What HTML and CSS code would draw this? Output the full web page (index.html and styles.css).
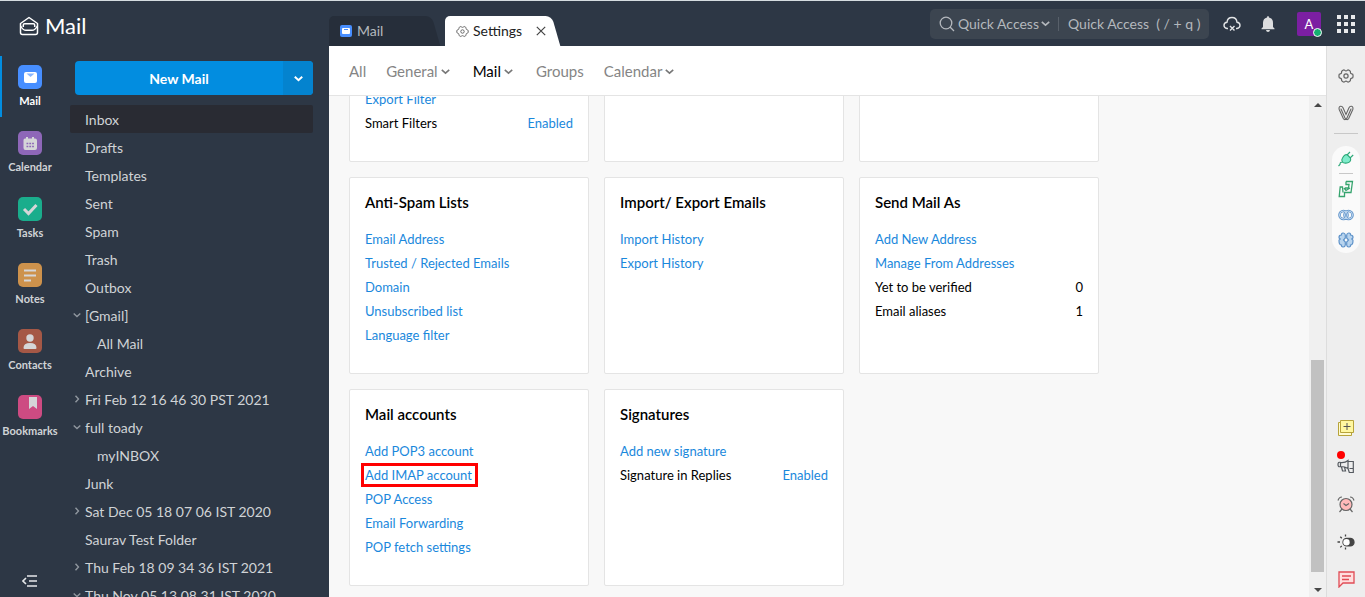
FILE: index.html
```html
<!DOCTYPE html>
<html lang="en">
<head>
<meta charset="utf-8">
<title>Mail - Settings</title>
<link rel="stylesheet" href="styles.css">
</head>
<body>
<svg class="defs" aria-hidden="true">
  <symbol id="gear" viewBox="0 0 16 16"><path d="M5 2.200q1-.7 1.800.2 1.200 1 2.400 0 .8-.9 1.800-.2l1 .7q.6.5.4 1.300-.1 1.300 1.400 1.700 1.200.2 1.200 1.100v2q0 .9-1.200 1.100-1.500.4-1.400 1.700.2.800-.4 1.300l-1 .7q-1 .7-1.800-.2-1.200-1-2.400 0-.8.9-1.800.2l-1-.7q-.6-.5-.4-1.300.1-1.300-1.400-1.700Q1 9.900 1 9V7q0-.9 1.200-1.100 1.500-.4 1.400-1.700-.2-.8.4-1.300z"/><circle cx="8" cy="8" r="2.100"/></symbol>
  <symbol id="down" viewBox="0 0 8 8"><path d="M.7 2.500 4 5.500l3.300-3"/></symbol>
  <symbol id="right" viewBox="0 0 8 8"><path d="M2.500.7 5.500 4l-3 3.300"/></symbol>
</svg>
<div class="app">
  <aside class="sidebar">
    <div class="brand">
      <svg width="20" height="20" viewBox="0 0 20 20" fill="none" stroke="#fff" stroke-width="1.500" stroke-linejoin="round"><path d="M1.500 7.500 10 1.500l8.500 6v9q0 2-2 2h-13q-2 0-2-2z"/><path d="M4.300 11V9q0-1.300 1.300-1.300h8.800q1.300 0 1.300 1.300v2M1.600 10Q4 14.300 7 14.300h6q3 0 5.400-4.300"/></svg>
      <span>Mail</span>
    </div>
    <div class="side-body">
      <nav class="apps" aria-label="Apps">
        <a class="app-link current" href="#mail"><svg viewBox="0 0 24 24"><rect width="24" height="24" rx="5" fill="#478eff"/><rect x="6" y="7" width="13" height="11" rx="2" fill="#fff"/><path d="M8.500 8.500h8L12.500 12z" fill="#8ab6ff"/></svg>Mail</a>
        <a class="app-link" href="#calendar"><svg viewBox="0 0 24 24"><rect width="24" height="24" rx="5" fill="#8e67b8"/><path d="M7 7.500h1V6h2v1.500h4V6h2v1.500h1q2 0 2 2V17q0 2-2 2H7.500q-2 0-2-2V9q0-1.500 1.500-1.500z" fill="#d5d6d8"/><path d="M8.500 12.500h8M8.500 15.500h8" stroke="#8e67b8" stroke-width="1.500" stroke-dasharray="1.800 1"/></svg>Calendar</a>
        <a class="app-link" href="#tasks"><svg viewBox="0 0 24 24"><rect width="24" height="24" rx="5" fill="#1aad8c"/><path d="m6 12 4.500 4.500L18.500 8" fill="none" stroke="#d5d6d8" stroke-width="3"/></svg>Tasks</a>
        <a class="app-link" href="#notes"><svg viewBox="0 0 24 24"><rect width="24" height="24" rx="5" fill="#cd924c"/><path d="M6 7.500h12M6 12.500h12M6 17.500h7" stroke="#d5d6d8" stroke-width="2.200"/></svg>Notes</a>
        <a class="app-link" href="#contacts"><svg viewBox="0 0 24 24"><rect width="24" height="24" rx="5" fill="#a55846"/><circle cx="12" cy="9" r="3.700" fill="#d5d6d8"/><path d="M5.500 19q0-5 6.500-5t6.500 5q0 1-1 1h-11q-1 0-1-1z" fill="#d5d6d8"/></svg>Contacts</a>
        <a class="app-link" href="#bookmarks"><svg viewBox="0 0 24 24"><rect width="24" height="24" rx="5" fill="#cd4b82"/><path d="M11 2h8v12l-4-3-4 3z" fill="#d5d6d8"/></svg>Bookmarks</a>
        <button class="collapse" type="button" aria-label="Collapse sidebar"><svg width="16" height="12" viewBox="0 0 16 12" fill="none" stroke="#e6e8ea" stroke-width="1.600"><path d="M5 1h10M7 6h8M5 11h10M4 3 1 6l3 3"/></svg></button>
      </nav>
      <div class="mailbox">
        <div class="compose">
          <button class="compose-main" type="button">New Mail</button>
          <button class="compose-more" type="button" aria-label="More options"><svg class="chev" width="9" height="9"><use href="#down"/></svg></button>
        </div>
        <nav class="folders" aria-label="Folders">
          <a class="folder selected" href="#f">Inbox</a>
          <a class="folder" href="#f">Drafts</a>
          <a class="folder" href="#f">Templates</a>
          <a class="folder" href="#f">Sent</a>
          <a class="folder" href="#f">Spam</a>
          <a class="folder" href="#f">Trash</a>
          <a class="folder" href="#f">Outbox</a>
          <a class="folder tree" href="#f"><svg class="chev" width="8" height="8"><use href="#down"/></svg>[Gmail]</a>
          <a class="folder child" href="#f">All Mail</a>
          <a class="folder" href="#f">Archive</a>
          <a class="folder tree" href="#f"><svg class="chev" width="8" height="8"><use href="#right"/></svg>Fri Feb 12 16 46 30 PST 2021</a>
          <a class="folder tree" href="#f"><svg class="chev" width="8" height="8"><use href="#down"/></svg>full toady</a>
          <a class="folder child" href="#f">myINBOX</a>
          <a class="folder" href="#f">Junk</a>
          <a class="folder tree" href="#f"><svg class="chev" width="8" height="8"><use href="#right"/></svg>Sat Dec 05 18 07 06 IST 2020</a>
          <a class="folder" href="#f">Saurav Test Folder</a>
          <a class="folder tree" href="#f"><svg class="chev" width="8" height="8"><use href="#right"/></svg>Thu Feb 18 09 34 36 IST 2021</a>
          <a class="folder tree" href="#f"><svg class="chev" width="8" height="8"><use href="#down"/></svg>Thu Nov 05 13 08 31 IST 2020</a>
        </nav>
      </div>
    </div>
  </aside>
  <div class="workspace">
    <header class="topbar">
      <div class="tabs">
        <a class="tab" href="#mail"><svg width="12" height="12" viewBox="0 0 12 12"><rect width="12" height="12" rx="2" fill="#478eff"/><rect x="2" y="3" width="8" height="6" rx="1" fill="#fff"/><path d="M4 4.500h4" stroke="#478eff"/></svg><span>Mail</span></a>
        <div class="tab active"><svg class="line" width="13" height="13"><use href="#gear"/></svg><span>Settings</span><button type="button" aria-label="Close tab"><svg width="10" height="10" viewBox="0 0 10 10" stroke="#444" stroke-width="1.200"><path d="m.8.8 8.400 8.400M9.200.8.800 9.200"/></svg></button></div>
      </div>
      <div class="tools">
        <div class="search">
          <svg width="16" height="16" viewBox="0 0 16 16" fill="none" stroke="#b4b8bd" stroke-width="1.300"><circle cx="7" cy="7" r="5.800"/><path d="m11 11 4 4"/></svg>
          <button class="scope" type="button">Quick Access<svg class="chev" width="9" height="9"><use href="#down"/></svg></button>
          <input type="text" aria-label="Quick Access" placeholder="Quick Access  ( / + q )">
        </div>
        <button type="button" class="tool" aria-label="Offline"><svg width="18" height="16" viewBox="0 0 18 16" fill="none" stroke="#e2e4e6" stroke-width="1.400"><path d="M5 12.500H4Q1 12 1 9.300 1 6.500 4 6.200 4.500 1.500 9 1.500t5 4.700q3 .3 3 3.100 0 2.700-3 3.200h-1M7 10l4.500 4.500M11.500 10 7 14.500"/></svg></button>
        <button type="button" class="tool" aria-label="Notifications"><svg width="14" height="16" viewBox="0 0 14 16" fill="#dcdddf"><path d="M6 1.500Q6 0 7 0t1 1.500q4 .8 4 5.500v4l1.500 1.500v.8H.5v-.8L2 11V7q0-4.700 4-5.500zM5 14h4q-.3 2-2 2t-2-2z"/></svg></button>
        <button type="button" class="avatar" aria-label="Account">A<span class="status"></span></button>
        <button type="button" class="tool" aria-label="All apps"><svg width="18" height="18" viewBox="0 0 18 18" fill="#e8e9eb"><path d="M0 0h4v4H0zM7 0h4v4H7zM14 0h4v4h-4zM0 7h4v4H0zM7 7h4v4H7zM14 7h4v4h-4zM0 14h4v4H0zM7 14h4v4H7zM14 14h4v4h-4z"/></svg></button>
      </div>
    </header>
    <div class="page">
      <main class="settings">
        <nav class="subnav" aria-label="Settings sections">
          <a href="#all">All</a>
          <a href="#general">General<svg class="chev" width="9" height="9"><use href="#down"/></svg></a>
          <a class="on" href="#mail">Mail<svg class="chev" width="9" height="9"><use href="#down"/></svg></a>
          <a href="#groups">Groups</a>
          <a href="#calendar">Calendar<svg class="chev" width="9" height="9"><use href="#down"/></svg></a>
        </nav>
        <div class="scroll-area">
          <div class="viewport">
            <div class="cards">
              <section class="card tail"><ul><li><a href="#s">Export Filter</a></li><li><span>Smart Filters</span><a href="#s">Enabled</a></li></ul></section>
              <section class="card"></section>
              <section class="card"></section>
              <section class="card"><h2>Anti-Spam Lists</h2><ul><li><a href="#s">Email Address</a></li><li><a href="#s">Trusted / Rejected Emails</a></li><li><a href="#s">Domain</a></li><li><a href="#s">Unsubscribed list</a></li><li><a href="#s">Language filter</a></li></ul></section>
              <section class="card"><h2>Import/ Export Emails</h2><ul><li><a href="#s">Import History</a></li><li><a href="#s">Export History</a></li></ul></section>
              <section class="card"><h2>Send Mail As</h2><ul><li><a href="#s">Add New Address</a></li><li><a href="#s">Manage From Addresses</a></li><li><span>Yet to be verified</span><span>0</span></li><li><span>Email aliases</span><span>1</span></li></ul></section>
              <section class="card"><h2>Mail accounts</h2><ul><li><a href="#s">Add POP3 account</a></li><li><a class="marked" href="#s">Add IMAP account</a></li><li><a href="#s">POP Access</a></li><li><a href="#s">Email Forwarding</a></li><li><a href="#s">POP fetch settings</a></li></ul></section>
              <section class="card"><h2>Signatures</h2><ul><li><a href="#s">Add new signature</a></li><li><span>Signature in Replies</span><a href="#s">Enabled</a></li></ul></section>
            </div>
          </div>
          <div class="scrollbar" aria-hidden="true">
            <svg width="8" height="4" viewBox="0 0 8 4"><path d="M0 4 4 0l4 4z" fill="#484848"/></svg>
            <div class="track"><div class="thumb"></div></div>
            <svg width="8" height="4" viewBox="0 0 8 4"><path d="m0 0 4 4 4-4z" fill="#484848"/></svg>
          </div>
        </div>
      </main>
      <aside class="dock">
        <button type="button" aria-label="Settings"><svg class="line" width="16" height="16"><use href="#gear"/></svg></button>
        <button type="button" aria-label="Widgets"><svg width="16" height="16" viewBox="0 0 16 16" fill="none" stroke="#666" stroke-width="1.100" stroke-linecap="round"><path d="M1.200 4.500Q.5 1.800 2.500 1.300q1.700-.3 2.500 1.500L8 9.500l3-6.700q.8-1.800 2.500-1.500 2 .5 1.300 3.200l-4 8.800q-1 2-2.800.9-1.800 1.100-2.800-.9zM3 4l4 9q.5 1 1 1.100M13 4 8.500 14"/></svg></button>
        <hr>
        <div class="pill">
          <button type="button" aria-label="Integrations"><svg width="16" height="16" viewBox="0 0 16 16" fill="none" stroke="#2ba878" stroke-width="1.100"><path d="M4.500 7q2.500-4.500 5-3l3 3q1 4-3.500 5-3.500.5-4.500-1-1.500-2 0-4z" fill="#7feccb"/><path d="m9 4 3-3M12 7l3.200-3M4.500 11.500Q2 10.500 2 13.500L.5 15"/></svg></button>
          <hr>
          <button type="button" aria-label="Streams"><svg width="16" height="18" viewBox="0 0 16 18" fill="none" stroke="#36a46e" stroke-width="1.300"><path d="M8 1.500h6.500L13 12.500H6.500V16.500H1.200L2.200 7H4.500L5 12.500M8 1.500v3h3L10.500 8H7M6 8l2 2.500L12 8"/></svg></button>
          <button type="button" aria-label="Links"><svg width="16" height="12" viewBox="0 0 16 12" fill="none" stroke="#5e92c9" stroke-width="2.600"><ellipse cx="5.500" cy="6" rx="4" ry="4"/><ellipse cx="10.500" cy="6" rx="4" ry="4"/><g stroke="#cfe2f5" stroke-width="0.900"><ellipse cx="5.500" cy="6" rx="4" ry="4"/><ellipse cx="10.500" cy="6" rx="4" ry="4"/></g></svg></button>
          <button type="button" aria-label="Assistant"><svg width="16" height="16" viewBox="0 0 16 16" fill="#b8d4ee" stroke="#5e92c9" stroke-width="1.200"><path d="M7.300 6V3Q7 .8 5 1 3.200 1.200 3.500 3 1 3 1 5.200 1 7 3 7q-2 0-2 1.500Q1 13 3.500 13q-.3 1.800 1.500 2 2 .2 2.300-2v-3L5.500 8zM8.700 6V3Q9 .8 11 1q1.800.2 1.500 2Q15 3 15 5.200 15 7 13 7q2 0 2 1.500 0 4.500-2.500 4.500.3 1.800-1.500 2-2 .2-2.300-2v-3L10.500 8z"/></svg></button>
        </div>
        <div class="dock-end">
          <button type="button" aria-label="Add note"><svg width="18" height="18" viewBox="0 0 18 18" stroke="#b7a33a" stroke-width="1"><path d="M1.500 3.500h13v13h-13z" fill="#fffbd0"/><path d="M3.500 1.500h13v12h-13z" fill="#fff7a0"/><path d="M10 4v7M6.500 7.500h7" stroke="#555"/></svg></button>
          <button type="button" class="news" aria-label="Announcements"><svg width="18" height="16" viewBox="0 0 18 16" fill="none" stroke="#555a60" stroke-width="1.200"><path d="M3.500 4.500Q8 5 11 2.500v8Q8 8.500 3.500 8.500zM3.500 4.500Q1 3.500 1 6.500t2.500 2M11 3.500h5.300V14.500h-4L11 10.500M12.500 10.500h3.800M4.500 9l1 4h3l-1-4"/></svg><span class="dot"></span></button>
          <button type="button" aria-label="Reminders"><svg width="18" height="18" viewBox="0 0 18 18" fill="none" stroke="#666" stroke-width="1.200"><circle cx="9" cy="9.500" r="6" fill="#ffb9b9"/><path d="m6.500 8.500 2.500 2 3-2M1 5.500Q2 2 5 2M17 5.500Q16 2 13 2M5 14l-2.500 3M13 14l2.500 3"/></svg></button>
          <button type="button" aria-label="Dark mode"><svg width="18" height="16" viewBox="0 0 18 16" fill="none" stroke="#444" stroke-width="1.300"><rect x="6" y="4.500" width="11" height="7.400" rx="3.700" fill="#444"/><circle cx="9.500" cy="8.200" r="3.200" fill="#fff" stroke="none"/><path d="M.5 8H3M3.300 2.800l1.500 1.500M3.300 13.400l1.500-1.500M8.500.5v2M8.500 13.500v2"/></svg></button>
          <button type="button" aria-label="Chat"><svg width="17" height="17" viewBox="0 0 17 17" fill="#ffdede" stroke="#e14c55" stroke-width="1.300"><path d="M1 1h15v11H5l-4 4z"/><path d="M4 5h9M4 8.500h7"/></svg></button>
        </div>
      </aside>
    </div>
  </div>
</div>
</body>
</html>
```
FILE: styles.css
```css
* { box-sizing: border-box; }
body { margin: 0; font-family: Lato, "Liberation Sans", sans-serif; color: #000; }
a { color: inherit; text-decoration: none; }
button { border: 0; padding: 0; background: none; font: inherit; color: inherit; cursor: pointer; }
svg { display: block; flex: none; }
.defs { position: absolute; width: 0; height: 0; }
.chev { fill: none; stroke: currentColor; stroke-width: 1.4; }
.line { fill: none; stroke: #666; stroke-width: 1.2; }
.app { display: flex; height: 100vh; border-top: 1px solid #d5dce0; overflow: hidden; }

.sidebar { display: flex; flex-direction: column; flex: 0 0 329px; background: #2d3745; color: #d0d3d6; }
.brand { display: flex; flex: 0 0 55px; align-items: center; gap: 6px; padding: 0 0 6px 19px; color: #fff; font-size: 22px; }
.side-body { display: flex; flex: 1; min-height: 0; }
.apps { display: flex; flex-direction: column; width: 60px; gap: 5px; }
.app-link { display: flex; flex-direction: column; align-items: center; gap: 5px; height: 61px; padding-top: 9px; font-size: 11px; font-weight: 700; line-height: 14px; }
.app-link svg { width: 24px; height: 24px; }
.app-link.current { color: #fff; box-shadow: inset 2px 0 #028de0; }
.collapse { display: flex; justify-content: center; margin: auto 0 10px; }
.mailbox { display: flex; flex: 1; flex-direction: column; min-width: 0; padding: 5px 16px 0 10px; }
.compose { display: flex; height: 34px; margin-left: 5px; flex: none; border-radius: 4px; overflow: hidden; background: #028de0; color: #fff; font-size: 14px; font-weight: 700; }
.compose-main { flex: 1; }
.compose-more { display: flex; align-items: center; justify-content: center; width: 30px; background: #0483cf; }
.compose-more .chev { stroke-width: 1.8; }
.folders { margin-top: 10px; min-height: 0; overflow: hidden; }
.folder { display: flex; align-items: center; height: 28px; padding-left: 15px; border-radius: 2px; font-size: 14px; white-space: nowrap; }
.folder.selected { background: #292b33; }
.folder.child { padding-left: 27px; }
.folder.tree { gap: 4px; padding-left: 3px; }
.folder .chev { color: #90979f; }

.workspace { display: flex; flex: 1; flex-direction: column; min-width: 0; }
.topbar { display: flex; flex: 0 0 45px; justify-content: space-between; background: #2d3745; }
.tabs { display: flex; align-items: flex-end; gap: 5px; font-size: 14px; }
.tab { position: relative; z-index: 0; display: flex; align-items: center; gap: 5px; width: 111px; height: 30px; padding-left: 11px; color: #b5b9be; }
.tab::before { content: ""; position: absolute; z-index: -1; inset: 0 4px 0 20px; border-radius: 0 6px 0 0; background: #262e3a; transform: skewX(16deg); }
.tab::after { content: ""; position: absolute; z-index: -1; inset: 0 30px 0 0; border-radius: 5px 0 0 0; background: #262e3a; }
.tab.active { width: 115px; gap: 4px; color: #222; }
.tab.active::before, .tab.active::after { background: #fff; }
.tab span { padding-bottom: 2px; }
.tab button { margin-left: 10px; }
.tools { display: flex; align-items: center; padding: 0 10px 0 0; gap: 14px; }
.search { display: flex; align-items: center; gap: 3px; height: 30px; padding: 0 3px 0 9px; border-radius: 5px; background: #3c4550; color: #b4b8bd; font-size: 14px; }
.scope { display: flex; align-items: center; gap: 2px; padding-right: 8px; border-right: 1px solid #58606a; line-height: 14px; }
.search input { width: 144px; border: 0; padding: 0 0 0 6px; background: none; color: inherit; font: inherit; }
.search input::placeholder { color: #b4b8bd; opacity: 1; white-space: pre; }
.tool { display: flex; justify-content: center; min-width: 18px; }
.tool + .tool { margin-left: 4px; }
.avatar { position: relative; width: 24px; height: 24px; margin: 0 2px 0 6px; border-radius: 2px; background: #7b1fa2; color: #fff; font-size: 13px; }
.status { position: absolute; right: -1px; bottom: -1px; width: 9px; height: 9px; border: 1px solid #fff; border-radius: 50%; background: #15b070; }

.page { display: flex; flex: 1; min-height: 0; }
.settings { display: flex; flex: 1; flex-direction: column; min-width: 0; }
.subnav { display: flex; flex: 0 0 50px; align-items: center; gap: 20px; padding: 0 20px; border-bottom: 1px solid #e4e4e4; background: #fff; color: #858585; font-size: 15px; }
.subnav a { display: flex; align-items: center; gap: 3px; padding-top: 1px; }
.subnav a:has(.chev) { margin-right: 3px; }
.subnav .chev { color: #777; }
.subnav .on { color: #000; }
.scroll-area { display: flex; flex: 1; min-height: 0; background: #f8f8f8; }
.viewport { display: flex; flex: 1; flex-direction: column; justify-content: flex-end; min-width: 0; overflow: hidden; padding: 0 20px 11px; }
.cards { display: grid; grid-template-columns: repeat(auto-fill, 240px); grid-auto-rows: 197px; gap: 15px; max-width: 800px; }
.card { padding: 15px; border: 1px solid #e4e4e4; border-radius: 2px; background: #fff; }
.card h2 { margin: 0 0 16px; font-size: 15px; font-weight: 600; line-height: 18px; }
.card ul { margin: 0; padding: 0; list-style: none; }
.card li { display: flex; align-items: center; justify-content: space-between; height: 24px; font-size: 13px; line-height: 16px; }
.card a { color: #1a88dc; }
.card.tail { display: flex; flex-direction: column; justify-content: flex-end; padding-bottom: 26px; }
.card .marked { outline: 3px solid #f00; outline-offset: 1px; padding-right: 2px; }
.scrollbar { display: flex; flex-direction: column; align-items: center; width: 17px; padding: 7px 2px 5px; background: #f0f0f0; }
.track { display: flex; flex: 1; flex-direction: column; justify-content: flex-end; align-self: stretch; padding: 5px 0 16px; }
.thumb { height: 46%; background: #c1c1c1; }

.dock { display: flex; flex: 0 0 39px; flex-direction: column; align-items: center; padding: 22px 0 9px; border-left: 1px solid #ddd; background: #eee; }
.dock > button + button { margin-top: 21px; }
.dock hr { width: 24px; margin: 12px 0; border: 0; border-top: 1px solid #c8c8c8; }
.pill { display: flex; flex-direction: column; align-items: center; width: 28px; padding: 5px 0; border-radius: 14px; background: #fafafa; gap: 11px; }
.pill hr { width: 14px; margin: -5px 0; }
.dock-end { display: flex; flex-direction: column; align-items: center; gap: 21px; margin-top: auto; }
.news { position: relative; }
.dot { position: absolute; left: 0; top: -7px; width: 8px; height: 8px; border-radius: 50%; background: #f00; }
```
